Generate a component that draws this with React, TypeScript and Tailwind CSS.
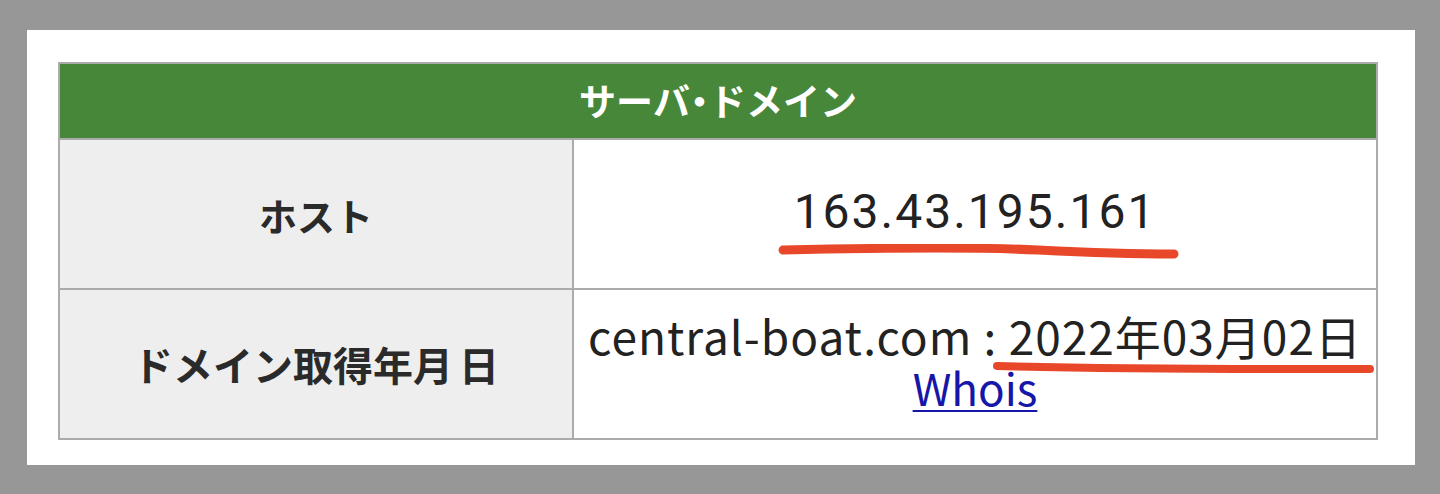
import React from "react";

const jp = "font-['Noto_Sans_CJK_JP','Noto_Sans',sans-serif]";

export default function App() {
  return (
    <div className="w-[1440px] h-[494px] bg-[#979797] pt-[30px] pl-[27px]">
      <div className="w-[1388px] h-[435px] bg-white pt-[32px] pl-[31px]">
        <div className="w-[1320px] border-2 border-[#ababab] bg-[#ababab] flex flex-col gap-[2px]">
          <div
            className={`h-[74px] bg-[#47873a] flex items-center justify-center text-white font-bold text-[37px] ${jp}`}
          >
            <span>サー</span>
            <span className="tracking-[-9px]">バ</span>
            <span className="tracking-[-9px]">・</span>
            <span>ドメイン</span>
          </div>
          <div className="flex h-[148px] gap-[2px]">
            <div
              className={`w-[512px] bg-[#eeeeee] flex items-center justify-center text-[#2a2a2a] font-bold text-[38px] ${jp}`}
            >
              ホスト
            </div>
            <div className="relative flex-1 bg-white flex items-center justify-center">
              <span className="font-['Roboto',sans-serif] text-[48px] text-[#222] tracking-[2px] pb-[4px]">
                163.43.195.161
              </span>
              <svg
                className="absolute left-[204px] top-[104px]"
                width="402"
                height="16"
                viewBox="0 0 402 16"
              >
                <path
                  d="M5 6 C 100 4, 200 3, 260 6 S 360 10, 396 10"
                  stroke="#e8472a"
                  strokeWidth="9"
                  strokeLinecap="round"
                  fill="none"
                />
              </svg>
            </div>
          </div>
          <div className="flex h-[148px] gap-[2px]">
            <div
              className={`w-[512px] bg-[#eeeeee] flex items-center justify-center text-[#2a2a2a] font-bold text-[40px] ${jp}`}
            >
              ドメイン取得年月<span className="ml-[6px]">日</span>
            </div>
            <div className="relative flex-1 bg-white flex flex-col items-center justify-center pb-[6px] text-[#222] font-['Noto_Sans_CJK_JP','Noto_Sans',sans-serif]">
              <span className="text-[46px] leading-[52px] tracking-[1px]">central-boat.com : 2022年03月02日</span>
              <a href="#" className="text-[44px] leading-[52px] text-[#1616a8] underline underline-offset-[4px] decoration-[2px]">
                Whois
              </a>
              <svg
                className="absolute left-[418px] top-[70px]"
                width="384"
                height="16"
                viewBox="0 0 384 16"
              >
                <path
                  d="M5 6 C 80 8, 200 9, 300 9 S 370 9, 378 9"
                  stroke="#e8472a"
                  strokeWidth="8"
                  strokeLinecap="round"
                  fill="none"
                />
              </svg>
            </div>
          </div>
        </div>
      </div>
    </div>
  );
}
